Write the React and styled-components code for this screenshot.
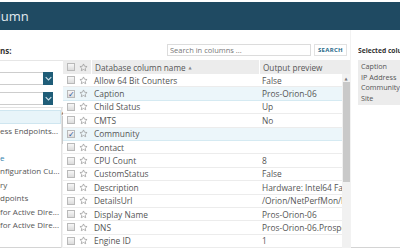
import React from "react";
import styled, { createGlobalStyle } from "styled-components";

const GlobalStyle = createGlobalStyle`
  html, body {
    margin: 0;
    padding: 0;
    background: #fff;
  }
  * {
    box-sizing: border-box;
  }
`;

const columns = [
  { name: "Allow 64 Bit Counters", preview: "False" },
  { name: "Caption", preview: "Pros-Orion-06", checked: true },
  { name: "Child Status", preview: "Up" },
  { name: "CMTS", preview: "No" },
  { name: "Community", preview: "", checked: true },
  { name: "Contact", preview: "" },
  { name: "CPU Count", preview: "8" },
  { name: "CustomStatus", preview: "False" },
  { name: "Description", preview: "Hardware: Intel64 Family 6 Model" },
  { name: "DetailsUrl", preview: "/Orion/NetPerfMon/NodeDetails" },
  { name: "Display Name", preview: "Pros-Orion-06" },
  { name: "DNS", preview: "Pros-Orion-06.Prospero.local" },
  { name: "Engine ID", preview: "1" },
];

const groups = [
  { label: "", selected: true },
  { label: "ess Endpoints..." },
  { label: "" },
  { label: "e", link: true },
  { label: "nfiguration Cu..." },
  { label: "ry" },
  { label: "dpoints" },
  { label: "for Active Dire..." },
  { label: "for Active Dire..." },
  { label: "" },
];

const selected = ["Caption", "IP Address", "Community", "Site"];

const Star = () => (
  <svg width="9" height="9" viewBox="0 0 24 24" fill="none" stroke="#9a9a9a" strokeWidth="2" strokeLinejoin="round">
    <path d="M12 2.5l2.9 6.1 6.6.8-4.9 4.6 1.3 6.6L12 17.3l-5.9 3.3 1.3-6.6-4.9-4.6 6.6-.8z" />
  </svg>
);

const Chevron = () => (
  <svg width="7" height="5" viewBox="0 0 10 6" fill="none" stroke="#cfe3ec" strokeWidth="1.6">
    <path d="M1 1l4 4 4-4" />
  </svg>
);

const App = () => {
  return (
    <Page>
      <GlobalStyle />
      <Header>
        <Title>Add Column</Title>
      </Header>
      <Body>
        <LeftPanel>
          <PanelLabel>ns:</PanelLabel>
          <Filters>
            <Select>
              <SelectButton>
                <Chevron />
              </SelectButton>
            </Select>
            <Select>
              <SelectButton>
                <Chevron />
              </SelectButton>
            </Select>
          </Filters>
          <GroupList>
            <GroupItems>
              {groups.map((g, i) => (
                <GroupRow key={i} $selected={g.selected} $link={g.link}>
                  {g.label}
                </GroupRow>
              ))}
            </GroupItems>
            <ScrollTrack>
              <ScrollArrow>▲</ScrollArrow>
              <ScrollThumb $height="28px" />
            </ScrollTrack>
          </GroupList>
        </LeftPanel>

        <MiddlePanel>
          <SearchBar>
            <SearchInput placeholder="Search in columns ..." />
            <SearchButton>SEARCH</SearchButton>
          </SearchBar>
          <Grid>
            <HeadRow>
              <HeadCell>
                <Checkbox />
              </HeadCell>
              <HeadCell>
                <Star />
              </HeadCell>
              <HeadCell $text>
                Database column name <SortArrow>▲</SortArrow>
              </HeadCell>
              <HeadCell $text>Output preview</HeadCell>
            </HeadRow>
            <GridBody>
              <Rows>
                {columns.map((c) => (
                  <Row key={c.name} $selected={c.checked}>
                    <Cell>
                      <Checkbox $checked={c.checked}>{c.checked ? "✓" : ""}</Checkbox>
                    </Cell>
                    <Cell>
                      <Star />
                    </Cell>
                    <Cell $text>{c.name}</Cell>
                    <Cell $text>{c.preview}</Cell>
                  </Row>
                ))}
              </Rows>
              <ScrollTrack>
                <ScrollArrow>▲</ScrollArrow>
                <ScrollThumb $height="100px" />
              </ScrollTrack>
            </GridBody>
          </Grid>
        </MiddlePanel>

        <RightPanel>
          <RightLabel>Selected columns:</RightLabel>
          <SelectedBox>
            {selected.map((s) => (
              <SelectedItem key={s}>{s}</SelectedItem>
            ))}
          </SelectedBox>
        </RightPanel>
      </Body>
    </Page>
  );
};

const Page = styled.div`
  width: 400px;
  height: 250px;
  overflow: hidden;
  font-family: "Open Sans", "DejaVu Sans", sans-serif;
  color: #555;
  padding-top: 2px;
  background: #fff;
`;

const Header = styled.div`
  height: 28px;
  background: #1f4a62;
  display: flex;
  align-items: center;
  overflow: hidden;
`;

const Title = styled.div`
  margin-left: -46px;
  font-size: 13px;
  color: #e2eaf0;
  white-space: nowrap;
  padding-bottom: 1px;
`;

const Body = styled.div`
  display: grid;
  grid-template-columns: 63px 287px 50px;
  height: 218px;
  border-bottom: 1px solid #d4d4d4;
`;

const PanelLabel = styled.div`
  height: 30px;
  padding-top: 15px;
  font-size: 8px;
  font-weight: 700;
  color: #333;
  white-space: nowrap;
  overflow: hidden;
`;

const RightLabel = styled(PanelLabel)`
  height: 28px;
  font-size: 6.7px;
  padding-top: 16px;
`;

const LeftPanel = styled.div`
  display: flex;
  flex-direction: column;
  overflow: hidden;
`;

const Filters = styled.div`
  border-top: 1px solid #e6e6e6;
  padding-top: 11px;
  display: flex;
  flex-direction: column;
  gap: 7px;
  padding-right: 10px;
`;

const Select = styled.div`
  height: 13px;
  border: 1px solid #cdcdcd;
  border-left: none;
  display: flex;
  justify-content: flex-end;
`;

const SelectButton = styled.div`
  width: 10px;
  margin: -1px -1px -1px 0;
  background: #1f5d78;
  display: flex;
  align-items: center;
  justify-content: center;
`;

const GroupList = styled.div`
  margin-top: 2px;
  flex: 1;
  display: flex;
  border-top: 1px solid #e2e2e2;
`;

const GroupItems = styled.div`
  flex: 1;
  padding-top: 2px;
  border-right: 1px solid #e2e2e2;
`;

const GroupRow = styled.div`
  height: 13.5px;
  line-height: 12px;
  font-size: 8px;
  white-space: nowrap;
  overflow: hidden;
  color: ${(p) => (p.$link ? "#2f7fae" : "#555")};
  background: ${(p) => (p.$selected ? "#e8f4f9" : "transparent")};
  border: 1px solid ${(p) => (p.$selected ? "#cfe6f0" : "transparent")};
  border-left: none;
`;

const ScrollTrack = styled.div`
  width: 8px;
  background: #f1f1f1;
  display: flex;
  flex-direction: column;
  align-items: stretch;
`;

const ScrollArrow = styled.div`
  height: 8px;
  font-size: 4px;
  color: #777;
  text-align: center;
  line-height: 9px;
`;

const ScrollThumb = styled.div`
  height: ${(p) => p.$height};
  background: #c9c9c9;
  margin: 0 0.5px;
`;

const MiddlePanel = styled.div`
  display: flex;
  flex-direction: column;
`;

const SearchBar = styled.div`
  height: 28px;
  padding: 14px 2px 0 104px;
  display: flex;
  gap: 3px;
`;

const SearchInput = styled.input`
  width: 144px;
  height: 12px;
  border: 1px solid #dcdcdc;
  font-family: inherit;
  font-size: 7.5px;
  padding: 0 2px;
  color: #555;
  outline: none;
  &::placeholder {
    color: #777;
  }
`;

const SearchButton = styled.div`
  width: 33px;
  height: 12px;
  border: 1px solid #e2e2e2;
  font-size: 6px;
  font-weight: 700;
  letter-spacing: 0.3px;
  color: #2a6a8a;
  display: flex;
  align-items: center;
  justify-content: center;
`;

const Grid = styled.div`
  margin-top: 2px;
  display: flex;
  flex-direction: column;
  flex: 1;
  overflow: hidden;
`;

const colTemplate = `13px 15px 168px`;

const HeadRow = styled.div`
  display: grid;
  grid-template-columns: ${colTemplate} 1fr;
  height: 14px;
  flex-shrink: 0;
  background: #ececec;
`;

const HeadCell = styled.div`
  display: flex;
  align-items: center;
  justify-content: ${(p) => (p.$text ? "flex-start" : "center")};
  padding-left: ${(p) => (p.$text ? "3px" : "0")};
  font-size: 8.2px;
  color: #555;
  white-space: nowrap;
  border-left: ${(p) => (p.$text ? "1px solid #fff" : "none")};
`;

const SortArrow = styled.span`
  font-size: 4px;
  color: #888;
  margin-left: 3px;
`;

const GridBody = styled.div`
  display: flex;
  flex: 1;
`;

const Rows = styled.div`
  flex: 1;
  display: flex;
  flex-direction: column;
`;

const Row = styled.div`
  display: grid;
  grid-template-columns: ${colTemplate} 1fr;
  height: 13.4px;
  flex-shrink: 0;
  background: ${(p) => (p.$selected ? "#ecf6fa" : "#fff")};
  border-bottom: 1px solid ${(p) => (p.$selected ? "#d5eaf2" : "#ececec")};
`;

const Cell = styled.div`
  display: flex;
  align-items: center;
  justify-content: ${(p) => (p.$text ? "flex-start" : "center")};
  padding-left: ${(p) => (p.$text ? "3px" : "0")};
  font-size: 8.4px;
  color: #555;
  white-space: nowrap;
  overflow: hidden;
`;

const Checkbox = styled.div`
  width: 8px;
  height: 8px;
  border: 1px solid #b9b9b9;
  background: linear-gradient(#f7f7f7, #dcdcdc);
  font-size: 8px;
  line-height: 6px;
  color: #2d55a0;
  font-weight: 700;
  text-align: center;
  margin-left: 3px;
`;

const RightPanel = styled.div`
  padding-left: 7px;
  border-left: 1px solid #f2f2f2;
  overflow: hidden;
  display: flex;
  flex-direction: column;
`;

const SelectedBox = styled.div`
  margin-top: 2px;
  background: #ececec;
  padding: 1px 3px 2px;
  display: flex;
  flex-direction: column;
`;

const SelectedItem = styled.div`
  height: 10.5px;
  line-height: 10.5px;
  font-size: 7.2px;
  color: #555;
  white-space: nowrap;
`;

export default App;
